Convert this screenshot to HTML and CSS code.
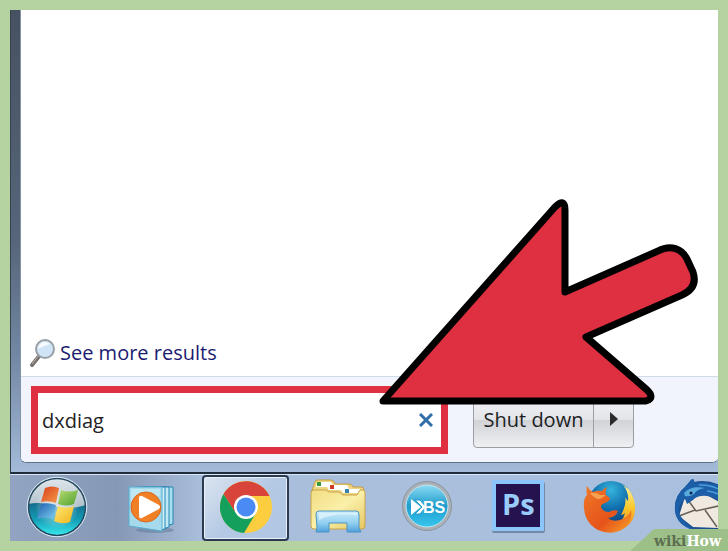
FILE: index.html
```html
<!DOCTYPE html>
<html lang="en">
<head>
  <meta charset="UTF-8">
  <meta name="viewport" content="width=device-width, initial-scale=1.0">
  <title>Start menu search</title>
  <link rel="stylesheet" href="styles.css">
</head>
<body>
  <main class="screen">
    <!-- Start menu -->
    <section class="menu">
      <div class="panel">
        <div class="results">
          <a class="more" href="#">
            <svg class="magnifier" viewBox="0 0 28 30" aria-hidden="true">
              <path d="M3 27 L11 17" stroke="#77716e" stroke-width="4" stroke-linecap="round"/>
              <path d="M3 26 L10 17" stroke="#b9b4b0" stroke-width="1"/>
              <circle cx="16" cy="11" r="9" fill="#cfe5f7" stroke="#9a9fa4" stroke-width="2"/>
              <path d="M9 11 A7 7 0 0 1 16 4 A8 8 0 0 1 21 6 Q14 8 9 11 Z" fill="#f6fbff"/>
            </svg>
            <span>See more results</span>
          </a>
        </div>
        <form class="footer">
          <div class="search">
            <input type="text" id="query" value="dxdiag" aria-label="Search programs and files">
            <button type="button" class="clear" aria-label="Clear search">
              <svg viewBox="0 0 14 14" aria-hidden="true"><path d="M1 1 L13 13 M13 1 L1 13"/></svg>
            </button>
          </div>
          <div class="power">
            <button type="button" class="shutdown">Shut down</button>
            <button type="button" class="options" aria-label="More options">
              <svg viewBox="0 0 8 14" aria-hidden="true"><path d="M0 0 L8 7 L0 14 Z"/></svg>
            </button>
          </div>
        </form>
      </div>
    </section>

    <!-- Taskbar -->
    <nav class="taskbar">
      <button type="button" class="orb" aria-label="Start">
        <svg viewBox="0 0 64 64" aria-hidden="true">
          <defs>
            <linearGradient id="orbTop" x1="0" y1="0" x2="0" y2="1">
              <stop offset="0" stop-color="#dfe7ec"/>
              <stop offset="1" stop-color="#8398a6"/>
            </linearGradient>
            <linearGradient id="orbWater" x1="0" y1="0" x2="0" y2="1">
              <stop offset="0" stop-color="#166b8c"/>
              <stop offset="0.5" stop-color="#129bb4"/>
              <stop offset="1" stop-color="#38e8ee"/>
            </linearGradient>
            <linearGradient id="flagRed" x1="0" y1="0" x2="1" y2="1">
              <stop offset="0" stop-color="#d8401a"/><stop offset="1" stop-color="#f79a4c"/>
            </linearGradient>
            <linearGradient id="flagGreen" x1="0" y1="0" x2="1" y2="1">
              <stop offset="0" stop-color="#b5dc70"/><stop offset="1" stop-color="#4f9f2f"/>
            </linearGradient>
            <linearGradient id="flagBlue" x1="0" y1="0" x2="1" y2="1">
              <stop offset="0" stop-color="#1c5fae"/><stop offset="1" stop-color="#7fd0f2"/>
            </linearGradient>
            <linearGradient id="flagYellow" x1="0" y1="0" x2="1" y2="1">
              <stop offset="0" stop-color="#ffe873"/><stop offset="1" stop-color="#f0b41c"/>
            </linearGradient>
            <radialGradient id="orbGlow">
              <stop offset="0.3" stop-color="#fff" stop-opacity="0.5"/>
              <stop offset="1" stop-color="#fff" stop-opacity="0"/>
            </radialGradient>
          </defs>
          <circle cx="32" cy="31" r="29" fill="url(#orbTop)"/>
          <path d="M3 28 Q18 25 32 31 Q46 34 61 29 A29 29 0 0 1 3 31 Z" fill="url(#orbWater)"/>
          <circle cx="32" cy="31" r="28.500" fill="none" stroke="#24495f" stroke-width="1.500"/>
          <circle cx="32" cy="31" r="29.800" fill="none" stroke="#dbeaf4" stroke-width="1"/>
          <circle cx="32" cy="31" r="22" fill="url(#orbGlow)"/>
          <path d="M20 12 Q27 9 34 12 L31 27 Q24 24 16 26 Z" fill="url(#flagRed)"/>
          <path d="M36 14 Q44 17 53 14 L49 28 Q41 31 33 28 Z" fill="url(#flagGreen)"/>
          <path d="M16 28 Q23 26 31 29 L28 43 Q20 40 12 43 Z" fill="url(#flagBlue)"/>
          <path d="M33 30 Q41 33 49 30 L45 46 Q37 49 29 45 Z" fill="url(#flagYellow)"/>
        </svg>
      </button>

      <button type="button" class="task" aria-label="Media Player">
        <svg viewBox="0 0 60 60" aria-hidden="true">
          <ellipse cx="30" cy="52" rx="19" ry="3" fill="#5d7896" opacity="0.5"/>
          <path d="M20 9 H48 V46 L40 48 Z" fill="#a9dff2" stroke="#2685b0"/>
          <path d="M16 9 H44 V49 L38 51 Z" fill="#bfe9f6" stroke="#2685b0"/>
          <path d="M12 9 H40 V51 L34 52 Z" fill="#cdeff9" stroke="#2685b0"/>
          <path d="M4 9 H37 V53 L4 48 Z" fill="#a5d9ec" stroke="#58adcf"/>
          <path d="M6 11 H35 V18 Q18 18 6 30 Z" fill="#cbebf6" opacity="0.7"/>
          <circle cx="21" cy="29" r="15" fill="#f07f26" stroke="#d8661b"/>
          <path d="M14 20 Q14 17 17 18 L34 27 Q36 29 34 31 L17 40 Q14 41 14 38 Z" fill="#fff"/>
        </svg>
      </button>

      <button type="button" class="task active" aria-label="Chrome">
        <svg viewBox="0 0 60 60" aria-hidden="true">
          <circle cx="30" cy="29" r="26" fill="#fccd3f"/>
          <path d="M30 29 L19 34 L7.500 16 A26 26 0 0 1 53.400 18 H30 Z" fill="#d9443a"/>
          <path d="M7.500 16 A26 26 0 0 0 28 55 L40 35 L30 29 L19 34 Z" fill="#14a05c"/>
          <circle cx="30" cy="29" r="12" fill="#fff"/>
          <circle cx="30" cy="29" r="9.500" fill="#4a8af4"/>
        </svg>
      </button>

      <button type="button" class="task" aria-label="File Explorer">
        <svg viewBox="0 0 60 60" aria-hidden="true">
          <defs>
            <linearGradient id="folder" x1="0" y1="0" x2="1" y2="1">
              <stop offset="0" stop-color="#f2dd83"/><stop offset="0.5" stop-color="#faf0a8"/><stop offset="1" stop-color="#e5c661"/>
            </linearGradient>
            <linearGradient id="stand" x1="0" y1="0" x2="0" y2="1">
              <stop offset="0" stop-color="#cdeefa"/><stop offset="0.6" stop-color="#8ecdf0"/><stop offset="1" stop-color="#4f9fdd"/>
            </linearGradient>
          </defs>
          <path d="M5 50 V12 L8 4 Q8 2 11 2 H24 Q27 2 28 6 H42 Q45 6 46 9 H54 Q57 9 57 12 V50 Z" fill="#eed680" stroke="#c39d43"/>
          <path d="M10 4 H24 L26 7 H40 L42 11 H53 V15 H36 L34 12 H22 L20 9 H9 Z" fill="#fff"/>
          <path d="M10 4 H14 V8 H10 Z" fill="#379a36"/>
          <path d="M23 7 H27 V11 H23 Z" fill="#ce3c25"/>
          <path d="M38 11 H42 V15 H38 Z" fill="#3585b4"/>
          <path d="M4 15 Q4 12 7 12 H19 L22 14 H32 L36 17 H50 L53 12 H56 Q58 12 58 14 V48 Q58 51 55 51 H7 Q4 51 4 48 Z" fill="url(#folder)" stroke="#c9a34a"/>
          <path d="M9 36 Q9 33 12 33 H49 Q52 33 52 36 V50 L54 54 H40 V45 H22 V54 H9 L10 50 Z" fill="url(#stand)" stroke="#4c94c4"/>
          <path d="M12 42 Q26 34 50 37 V35 H12 Z" fill="#e5f7fc" opacity="0.7"/>
        </svg>
      </button>

      <button type="button" class="task" aria-label="BS Player">
        <svg viewBox="0 0 60 60" aria-hidden="true">
          <defs>
            <linearGradient id="bs" x1="0" y1="0" x2="0" y2="1">
              <stop offset="0" stop-color="#8bdcf4"/><stop offset="0.5" stop-color="#209ccc"/><stop offset="1" stop-color="#37c6ee"/>
            </linearGradient>
          </defs>
          <circle cx="29" cy="28" r="24.500" fill="#abb1b7" stroke="#8a949e"/>
          <circle cx="29" cy="28" r="21" fill="url(#bs)" stroke="#c4e4f0"/>
          <path d="M13 21 L23 29 L13 37 Z" fill="#fff"/>
          <path d="M17 22 H22 L28 29 L22 36 H17 L24 29 Z" fill="#fff" stroke="#209ccc" stroke-width="1"/>
          <text class="bs-text" x="25" y="35">BS</text>
        </svg>
      </button>

      <button type="button" class="task" aria-label="Photoshop">
        <svg viewBox="0 0 60 60" aria-hidden="true">
          <rect x="3" y="4" width="53" height="51" rx="2" fill="#52677f" opacity="0.6"/>
          <rect x="3" y="2" width="52" height="51" rx="1" fill="#8cc5fa"/>
          <rect x="7" y="6" width="44" height="43" fill="#24134f"/>
          <text class="ps-text" x="13" y="37">Ps</text>
        </svg>
      </button>

      <button type="button" class="task" aria-label="Firefox">
        <svg viewBox="0 0 60 60" aria-hidden="true">
          <defs>
            <radialGradient id="globe" cx="0.5" cy="0.2" r="0.8">
              <stop offset="0" stop-color="#35b4dc"/><stop offset="0.5" stop-color="#116fae"/><stop offset="1" stop-color="#103a70"/>
            </radialGradient>
            <linearGradient id="fox" x1="0" y1="0" x2="1" y2="1">
              <stop offset="0" stop-color="#ef7a25"/><stop offset="0.6" stop-color="#e6531c"/><stop offset="1" stop-color="#f7a327"/>
            </linearGradient>
            <linearGradient id="tail" x1="0" y1="0" x2="0" y2="1">
              <stop offset="0" stop-color="#fff0a0"/><stop offset="0.5" stop-color="#fbc92c"/><stop offset="1" stop-color="#ee7f1d"/>
            </linearGradient>
          </defs>
          <circle cx="31" cy="26" r="23" fill="url(#globe)"/>
          <path d="M43 7 Q54 13 55 28 Q56 42 46 49 Q36 55 31 49 Q43 45 45 35 Q43 37 41 37 Q47 26 45 19 Q46 21 48 23 Q49 14 43 7 Z" fill="url(#tail)"/>
          <path d="M7 8 Q9 12 13 14 Q17 12 22 13 Q24 10 27 9 Q25 13 26 17 L30 20 Q30 23 25 25 Q21 26 21 29 Q23 34 29 34 Q34 31 38 33 Q36 39 28 40 Q33 45 43 41 Q49 38 51 32 Q53 44 43 51 Q31 58 18 52 Q5 45 4 30 Q3 21 7 17 Q6 12 7 8 Z" fill="url(#fox)"/>
          <path d="M10 15 Q16 14 20 17 L26 17 Q23 20 19 21 Q15 21 10 15 Z" fill="#f6a052"/>
        </svg>
      </button>

      <button type="button" class="task" aria-label="Thunderbird">
        <svg viewBox="0 0 60 60" aria-hidden="true">
          <path d="M4 32 Q3 18 14 9 L20 2 Q23 0 23 4 Q42 0 60 14 V50 Q46 58 28 54 Q5 48 4 32 Z" fill="#1b4f92"/>
          <path d="M14 19 L32 15 L54 27 L47 50 L22 49 L8 38 Z" fill="#f0e9df"/>
          <path d="M17 22 L25 33 L52 27 M8 38 L24 32 M46 49 L34 32" fill="none" stroke="#67605c" stroke-width="1.500"/>
          <path d="M4 32 Q3 18 14 9 L21 1 Q24 1 23 5 Q42 2 60 14 V32 Q49 19 36 18 Q27 17 22 22 L16 26 L14 21 Q7 26 8 35 Q12 44 24 53 Q5 47 4 32 Z" fill="#1c5fa8"/>
          <path d="M13 15 Q20 7 34 10 Q26 11 23 16 Q19 19 14 18 Z" fill="#58a9dd"/>
          <path d="M28 7 Q44 6 58 18 M36 13 Q48 14 57 23" fill="none" stroke="#4b9ed8" stroke-width="1.500"/>
          <circle cx="20" cy="15" r="1.500" fill="#0c2347"/>
          <path d="M48 24 Q54 36 46 52 Q58 45 59 28 Z" fill="#153b7c"/>
        </svg>
      </button>
    </nav>

    <svg class="pointer" viewBox="0 0 330 216" aria-hidden="true">
      <path d="M7 208 L179 14 Q189 4 189 17 L189 99 L282 58 C295 51 306 56 311 66 L317 79 C321 91 315 98 306 102 L210 144 L270 196 Q280 205 270 208 Z"/>
    </svg>
  </main>

  <div class="watermark"><span>wiki</span>How</div>
</body>
</html>
```

FILE: styles.css
```css
* {
  box-sizing: border-box;
}

body {
  margin: 0;
  padding: 10px;
  height: 100vh;
  overflow: hidden;
  position: relative;
  background-color: #b4d3a0;
  font-family: "Open Sans", "Noto Sans", sans-serif;
}

button,
input {
  font: inherit;
}

button {
  padding: 0;
  border: none;
  background: none;
  cursor: pointer;
}

.screen {
  position: relative;
  display: flex;
  flex-direction: column;
  height: 100%;
  overflow: hidden;
}

/* Start menu */
.menu {
  flex: 1;
  display: flex;
  padding: 0 0 9px 9px;
  background: linear-gradient(#465261, #56657a 50%, #7288a4 75%, #a3bad9);
  border-left: 1px solid #38424f;
  border-bottom: 2px solid #1f2c3d;
}

.panel {
  flex: 1;
  display: flex;
  flex-direction: column;
  background-color: #fff;
  border-left: 1px solid #8592a3;
  border-bottom: 1px solid #62718a;
  border-radius: 0 0 6px 6px;
  overflow: hidden;
}

.results {
  flex: 1;
  display: flex;
  align-items: flex-end;
  padding: 8px;
}

.more {
  display: flex;
  align-items: center;
  gap: 3px;
  color: #1b1b72;
  font-size: 20px;
  line-height: 28px;
  text-decoration: none;
}

.magnifier {
  width: 28px;
  height: 30px;
}

.footer {
  display: flex;
  align-items: center;
  gap: 25px;
  height: 86px;
  padding: 0 10px;
  background-color: #f1f4fc;
  border-top: 1px solid #cfdbe8;
}

.search {
  display: flex;
  align-items: center;
  width: 417px;
  height: 68px;
  padding-right: 8px;
  background-color: #fff;
  border: 7px solid #de3040;
}

.search input {
  flex: 1;
  min-width: 0;
  padding: 2px 4px 0;
  border: none;
  outline: none;
  background: none;
  color: #222;
  font-size: 20px;
}

.clear svg {
  display: block;
  width: 14px;
  height: 14px;
  fill: none;
  stroke: #2f6ea8;
  stroke-width: 3;
}

.power {
  display: flex;
  height: 56px;
  border: 1px solid #9a9ea5;
  border-radius: 4px;
  background: linear-gradient(#f5f5f7, #e3e4e8 50%, #d0d2d6 50%, #eff0f2);
}

.shutdown {
  width: 119px;
  color: #1d1d1f;
  font-size: 20px;
}

.options {
  width: 40px;
  border-left: 1px solid #9a9ea5;
}

.options svg {
  width: 8px;
  height: 14px;
  fill: #2b2b2d;
}

/* Taskbar */
.taskbar {
  display: flex;
  gap: 4px;
  height: 67px;
  padding-left: 1px;
  background: linear-gradient(90deg, #91a5c2, #8598b5 15%, #a9bedb 27%, #a9c0de);
  border-top: 1px solid #dce7f4;
}

.taskbar button {
  flex: none;
  display: flex;
  align-items: center;
  justify-content: center;
}

.orb {
  width: 96px;
  padding-right: 4px;
}

.orb svg {
  width: 64px;
  height: 64px;
}

.task {
  width: 87px;
}

.task svg {
  width: 60px;
  height: 60px;
}

.task.active {
  border: 2px solid #2c3a50;
  border-radius: 4px;
  background: linear-gradient(135deg, #dce5f1, #b4c9e4 50%, #b0c6e3);
  box-shadow: inset 0 0 0 1px #e8f0fa;
}

.bs-text {
  font: bold 16px "Liberation Sans", sans-serif;
  fill: #fff;
}

.ps-text {
  font: bold 29px "Open Sans", sans-serif;
  fill: #9accfb;
}

/* Arrow over the search box */
.pointer {
  position: absolute;
  left: 366px;
  bottom: 132px;
  width: 330px;
  height: 216px;
  fill: #de3040;
  stroke: #000;
  stroke-width: 7;
  stroke-linejoin: round;
}

.watermark {
  position: absolute;
  right: 0;
  bottom: 0;
  width: 98px;
  height: 22px;
  padding-left: 24px;
  background-color: #9cc087;
  clip-path: polygon(24px 0, 100% 0, 100% 100%, 0 100%);
  color: #fff;
  font: bold 14px/24px "DejaVu Serif", serif;
}

.watermark span {
  color: #5c6f50;
}
```
